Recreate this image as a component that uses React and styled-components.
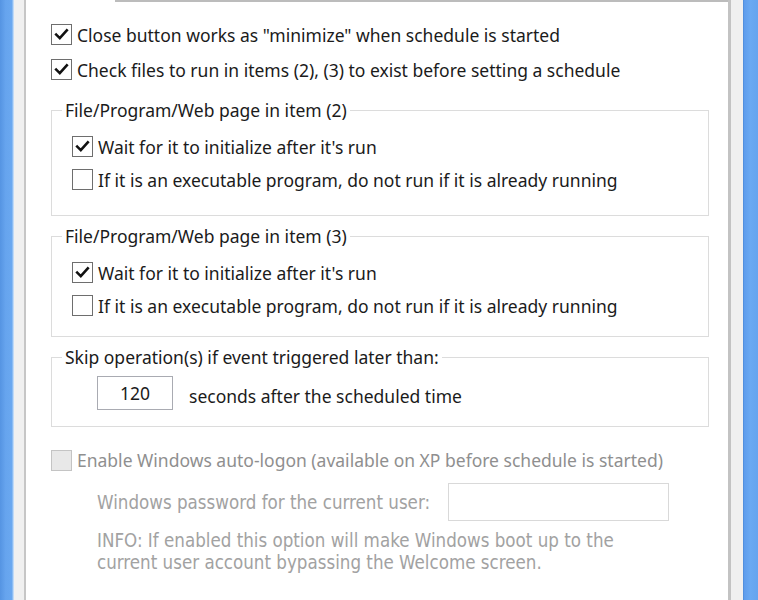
import React from "react";
import styled, { createGlobalStyle } from "styled-components";

const Global = createGlobalStyle`
  html, body { margin: 0; padding: 0; background: #ffffff; }
  body { width: 758px; height: 600px; overflow: hidden; }
`;

const Window = styled.div`
  display: flex;
  width: 758px;
  height: 600px;
  font-family: "Noto Sans", "Open Sans", sans-serif;
  font-size: 17.5px;
  color: #1b1b1b;
`;

const BlueFrame = styled.div`
  flex: none;
  width: ${(p) => p.$w}px;
  background: ${(p) =>
    p.$side === "left"
      ? "linear-gradient(90deg, #5594e2 0, #66a4ee 40%, #6aa8f0 85%, #a9cdf6 93%, #d9e8f8 100%)"
      : "linear-gradient(90deg, #4a86d2 0, #5e9ded 8%, #6aa9f2 50%, #65a4ee 100%)"};
`;

const Strip = styled.div`
  flex: none;
  width: ${(p) => p.$w}px;
  background: #f0f0f0;
`;

const Panel = styled.div`
  flex: 1;
  display: flex;
  flex-direction: column;
  background: #ffffff;
  border-left: 2px solid #c6c6c6;
  border-right: 3px solid #c3c3c3;
`;

const TabEdge = styled.div`
  display: flex;
  height: 2px;
  flex: none;
`;

const TabGap = styled.div`
  width: 89px;
  background: #ffffff;
`;

const TabLine = styled.div`
  flex: 1;
  background: #bcbcbc;
`;

const Content = styled.div`
  display: flex;
  flex-direction: column;
  padding: 15px 19px 0 25px;
`;

const CheckRow = styled.label`
  display: flex;
  align-items: center;
  gap: 5px;
  height: ${(p) => p.$h || 35}px;
  color: ${(p) => (p.$disabled ? "#8f8f8f" : "#1b1b1b")};
  white-space: nowrap;
`;

const Box = styled.span`
  flex: none;
  display: flex;
  align-items: center;
  justify-content: center;
  width: 19px;
  height: 19px;
  border: 1px solid ${(p) => (p.$disabled ? "#c4c4c4" : "#6e6e6e")};
  background: ${(p) => (p.$disabled ? "#e8e8e8" : "#ffffff")};
`;

const Group = styled.fieldset`
  margin: ${(p) => p.$top}px 0 0 0;
  padding: 0;
  border: 1px solid #dcdcdc;
  height: ${(p) => p.$h}px;
  box-sizing: border-box;
  min-inline-size: 0;
`;

const Legend = styled.legend`
  margin-left: 10px;
  padding: 0 3px;
  line-height: 24px;
  color: #1b1b1b;
`;

const GroupBody = styled.div`
  display: flex;
  flex-direction: column;
  padding: ${(p) => p.$pt}px 0 0 ${(p) => p.$pl}px;
`;

const DelayRow = styled.div`
  display: flex;
  align-items: center;
  gap: 16px;
`;

const NumberField = styled.div`
  width: 76px;
  height: 34px;
  box-sizing: border-box;
  border: 1px solid #a9abb2;
  display: flex;
  align-items: center;
  justify-content: center;
  color: #1b1b1b;
`;

const DelayText = styled.span`
  padding-top: 5px;
`;

const AutoLogon = styled.div`
  display: flex;
  flex-direction: column;
  margin-top: 16px;
`;

const Indented = styled.div`
  display: flex;
  flex-direction: column;
  padding-left: 46px;
  font-family: "DejaVu Sans Condensed", "DejaVu Sans", sans-serif;
  font-size: 18.6px;
  color: #a2a2a2;
`;

const PasswordRow = styled.div`
  display: flex;
  align-items: center;
  gap: 18px;
  margin-top: 6px;
`;

const PasswordField = styled.div`
  width: 221px;
  height: 38px;
  box-sizing: border-box;
  border: 1px solid #d9d9d9;
  background: #ffffff;
`;

const Info = styled.p`
  margin: 9px 0 0 0;
  line-height: 22px;
`;

function Check({ checked, disabled }) {
  return (
    <Box $disabled={disabled}>
      {checked && (
        <svg width="15" height="15" viewBox="0 0 15 15">
          <path
            d="M2.2 7.6 L5.8 11.2 L12.8 3.4"
            fill="none"
            stroke="#111"
            strokeWidth="2.6"
            strokeLinecap="square"
            strokeLinejoin="miter"
          />
        </svg>
      )}
    </Box>
  );
}

function Option({ checked, disabled, h, children }) {
  return (
    <CheckRow $h={h} $disabled={disabled}>
      <Check checked={checked} disabled={disabled} />
      <span>{children}</span>
    </CheckRow>
  );
}

function ItemGroup({ item, top, h }) {
  return (
    <Group $top={top} $h={h}>
      <Legend>File/Program/Web page in item ({item})</Legend>
      <GroupBody $pt={8} $pl={20}>
        <Option checked h={33}>Wait for it to initialize after it's run</Option>
        <Option h={33}>If it is an executable program, do not run if it is already running</Option>
      </GroupBody>
    </Group>
  );
}

export default function App() {
  return (
    <>
      <Global />
      <Window>
        <BlueFrame $side="left" $w={14} />
        <Strip $w={10} />
        <Panel>
          <TabEdge>
            <TabGap />
            <TabLine />
          </TabEdge>
          <Content>
            <Option checked>Close button works as "minimize" when schedule is started</Option>
            <Option checked>Check files to run in items (2), (3) to exist before setting a schedule</Option>

            <ItemGroup item={2} top={11} h={118} />
            <ItemGroup item={3} top={8} h={113} />

            <Group $top={8} $h={82}>
              <Legend>Skip operation(s) if event triggered later than:</Legend>
              <GroupBody $pt={7} $pl={45}>
                <DelayRow>
                  <NumberField>120</NumberField>
                  <DelayText>seconds after the scheduled time</DelayText>
                </DelayRow>
              </GroupBody>
            </Group>

            <AutoLogon>
              <Option disabled h={34}>
                Enable Windows auto-logon (available on XP before schedule is started)
              </Option>
              <Indented>
                <PasswordRow>
                  <span>Windows password for the current user:</span>
                  <PasswordField />
                </PasswordRow>
                <Info>
                  INFO: If enabled this option will make Windows boot up to the
                  <br />
                  current user account bypassing the Welcome screen.
                </Info>
              </Indented>
            </AutoLogon>
          </Content>
        </Panel>
        <Strip $w={12} />
        <BlueFrame $side="right" $w={15} />
      </Window>
    </>
  );
}
